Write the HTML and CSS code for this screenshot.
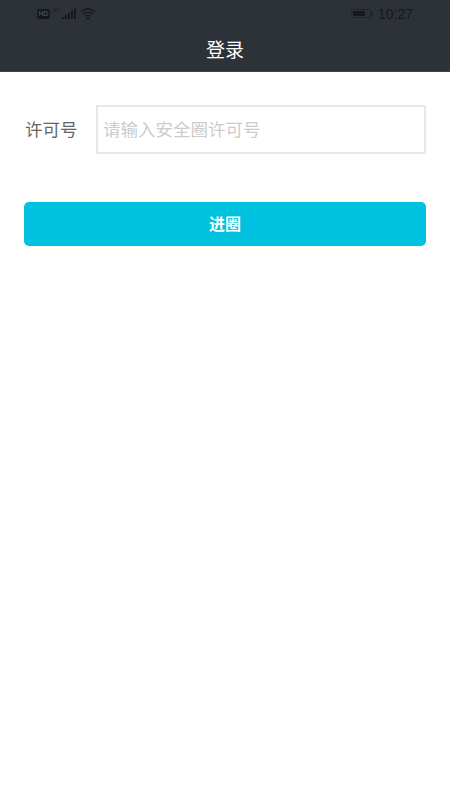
FILE: index.html
```html
<!DOCTYPE html>
<html>
<head>
  <title>登录</title>
  <link rel="stylesheet" href="styles.css">
</head>
<body>
  <header class="app-header">
    <div class="status-bar">
      <div class="status-left">
        <span class="hd-badge">HD</span>
        <span class="net-label">4G</span>
        <svg class="signal-icon" width="14" height="12" viewBox="0 0 14 12">
          <rect x="0" y="9" width="2" height="2"/>
          <rect x="3" y="7" width="2" height="4"/>
          <rect x="6" y="5" width="2" height="6"/>
          <rect x="9" y="2.5" width="2" height="8.5"/>
          <rect x="12" y="0.5" width="2" height="10.5"/>
        </svg>
        <svg class="wifi-icon" width="16" height="12" viewBox="0 0 16 12">
          <path d="M0.8 3.6C4.8 0.1 11.2 0.1 15.2 3.6M3 6C5.8 3.6 10.2 3.6 13 6M5.2 8.2C6.8 7 9.2 7 10.8 8.2" fill="none" stroke="#16181d" stroke-width="1.3"/>
          <circle cx="8" cy="10.4" r="1.3" fill="#16181d"/>
        </svg>
      </div>
      <div class="status-right">
        <span class="battery"><span class="battery-level"></span></span>
        <span class="battery-cap"></span>
        <span class="status-time">10:27</span>
      </div>
    </div>
    <h1 class="header-title">登录</h1>
  </header>

  <main class="login-form">
    <div class="form-row">
      <label class="form-label">许可号</label>
      <div class="form-input">请输入安全圈许可号</div>
    </div>
    <button class="enter-button">进圈</button>
  </main>
</body>
</html>
```

FILE: styles.css
```css
/* Base styles for page */
html, body {
  height: 100%;
}

body {
  margin: 0;
  background: #fff;
  font-family: "Liberation Sans", "Noto Sans CJK SC", sans-serif;
}

/* Header with status bar */
.app-header {
  height: 71px;
  background: #2d3138;
  border-bottom: 1px solid #3f4248;
}

.status-bar {
  height: 27px;
  display: flex;
  justify-content: space-between;
  align-items: center;
  padding: 0 37px;
}

.status-left,
.status-right {
  display: flex;
  align-items: center;
}

.hd-badge {
  width: 13px;
  height: 10px;
  background: #16181d;
  border-radius: 2px;
  color: #45484f;
  font-size: 7px;
  font-weight: bold;
  line-height: 10px;
  text-align: center;
}

.net-label {
  width: 8px;
  margin: -7px 0 0 3px;
  color: #16181d;
  font-size: 5px;
}

.signal-icon {
  margin-left: 1px;
  fill: #16181d;
}

.wifi-icon {
  margin-left: 4px;
}

.battery {
  width: 20px;
  height: 9px;
  box-sizing: border-box;
  border: 1px solid #22252b;
  border-radius: 2px;
  padding: 1px;
}

.battery-level {
  display: block;
  width: 12px;
  height: 100%;
  background: #16181d;
}

.battery-cap {
  width: 2px;
  height: 5px;
  margin-right: 5px;
  background: #22252b;
  border-radius: 0 1px 1px 0;
}

.status-time {
  color: #16181d;
  font-size: 14px;
}

.header-title {
  margin: 0;
  padding-top: 13px;
  color: #fff;
  font-size: 19px;
  font-weight: normal;
  line-height: 22px;
  text-align: center;
}

/* Login form */
.login-form {
  padding: 33px 24px 0;
}

.form-row {
  display: flex;
  align-items: center;
  gap: 20px;
}

.form-label {
  width: 52px;
  margin-left: 1px;
  margin-right: -1px;
  color: #666;
  font-size: 17.5px;
  line-height: 24px;
  white-space: nowrap;
}

.form-input {
  flex: 1;
  height: 49px;
  box-sizing: border-box;
  border: 2px solid #e8e8e8;
  padding-left: 5px;
  color: #ccc;
  font-size: 17.5px;
  line-height: 47px;
}

.enter-button {
  display: block;
  width: 100%;
  height: 44px;
  margin-top: 48px;
  padding-bottom: 3px;
  border: 0;
  border-radius: 5px;
  background: #00c2de;
  color: #fff;
  font-family: inherit;
  font-size: 16px;
  font-weight: bold;
}
```
